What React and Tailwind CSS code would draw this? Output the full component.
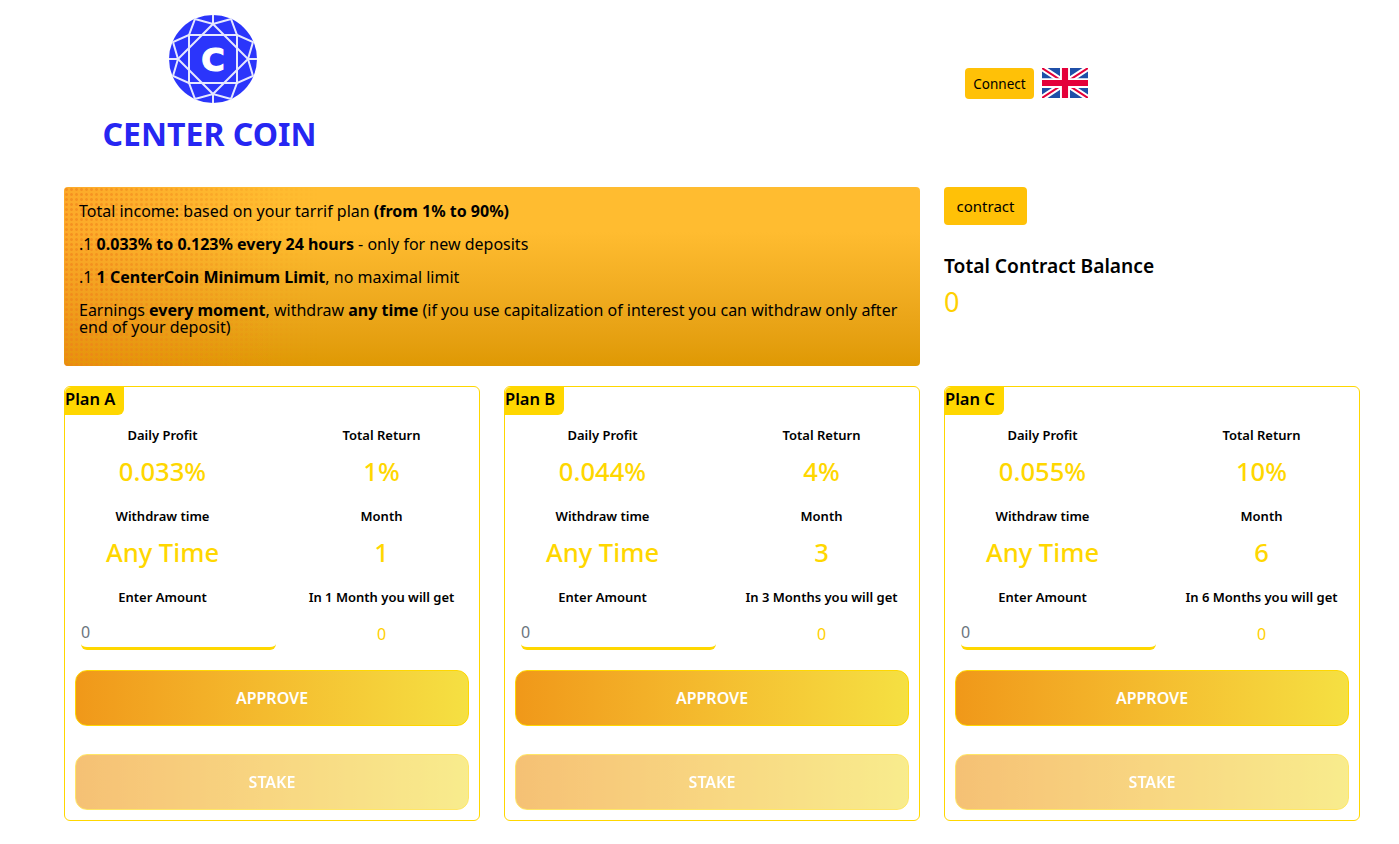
const plans = [
  { name: 'Plan A', daily: '0.033%', total: '1%', month: '1', get: 'In 1 Month you will get' },
  { name: 'Plan B', daily: '0.044%', total: '4%', month: '3', get: 'In 3 Months you will get' },
  { name: 'Plan C', daily: '0.055%', total: '10%', month: '6', get: 'In 6 Months you will get' },
]

// facets of the coin: tip -> rim -> square corner -> rim -> tip, all the way round
const facets =
  '0,-35 18,-40 24,-24 40,-17 35,0 40,17 24,24 18,40 0,35 -18,40 -24,24 -40,17 -35,0 -40,-17 -24,-24 -18,-40'

function Logo() {
  return (
    <svg width="88" height="88" viewBox="-44 -44 88 88">
      <circle cx="0" cy="0" r="44" fill="#2b35fb" />
      <g fill="none" stroke="#e6e8ff" strokeWidth="2">
        <polygon points={facets} />
        <rect x="-24" y="-24" width="48" height="48" />
        <polygon points="0,-35 35,0 0,35 -35,0" />
        <path d="M0 -44V-35M0 44V35M-44 0H-35M44 0H35" />
      </g>
      <text
        x="0"
        y="12"
        textAnchor="middle"
        fill="#fff"
        stroke="#fff"
        strokeWidth="1.2"
        fontSize="32"
        fontWeight="700"
        fontFamily="'DejaVu Sans', sans-serif"
      >
        C
      </text>
    </svg>
  )
}

function Flag() {
  return (
    <svg width="46" height="30" viewBox="0 0 60 40" preserveAspectRatio="none">
      <rect width="60" height="40" fill="#1f4fa8" />
      <path d="M0 0L60 40M60 0L0 40" stroke="#fff" strokeWidth="8" />
      <path d="M0 0L60 40M60 0L0 40" stroke="#e4003a" strokeWidth="2.6" />
      <path d="M30 0V40M0 20H60" stroke="#fff" strokeWidth="13" />
      <path d="M30 0V40M0 20H60" stroke="#e4003a" strokeWidth="8" />
    </svg>
  )
}

function Stat({ label, value }) {
  return (
    <div className="text-center">
      <div className="h-5 text-[13px] leading-5 font-semibold text-black">{label}</div>
      <div className="h-[54px] mb-[7px] leading-[54px] text-[#ffd700] text-[25.6px] font-medium">{value}</div>
    </div>
  )
}

function PlanCard({ plan }) {
  return (
    <div className="border border-[#ffd700] rounded-md bg-white">
      <div className="w-[59px] h-7 bg-[#ffd700] rounded-br-md rounded-tl-md text-[16.5px] leading-6 font-semibold text-black">
        {plan.name}
      </div>
      <div className="grid grid-cols-[219px_219px] -mx-3 pt-2.5">
        <Stat label="Daily Profit" value={plan.daily} />
        <Stat label="Total Return" value={plan.total} />
        <Stat label="Withdraw time" value="Any Time" />
        <Stat label="Month" value={plan.month} />
        <div className="h-5 text-[13px] leading-5 font-semibold text-black text-center">Enter Amount</div>
        <div className="h-5 text-[13px] leading-5 font-semibold text-black text-center">{plan.get}</div>
        <div className="pt-[11px] pl-[28px]">
          <input
            placeholder="0"
            className="block w-[195px] h-8 pb-0.5 border-b-[3px] border-[#ffd700] rounded-md text-[16px] outline-none placeholder:text-[#6c757d]"
          />
        </div>
        <div className="pt-[11px] h-[43px] text-center text-[16px] leading-8 text-[#ffd000]">0</div>
      </div>
      <div className="flex flex-col gap-7 px-2.5 pt-5 pb-2.5">
        <button className="h-14 rounded-xl border border-[#ffd700] bg-linear-to-r from-[#f09819] to-[#f5e042] text-[16px] font-semibold text-white">
          APPROVE
        </button>
        <button className="h-14 rounded-xl border border-[#ffd700] bg-linear-to-r from-[#f09819] to-[#f5e042] text-[16px] font-semibold text-white opacity-60">
          STAKE
        </button>
      </div>
    </div>
  )
}

export default function App() {
  return (
    <div className="min-h-[844px] bg-white pl-16 pr-[39px] font-['Noto_Sans','Open_Sans',sans-serif] text-black">
      <div className="flex h-[187px]">
        <div className="w-[298px] pt-[15px] flex flex-col items-center">
          <Logo />
          <div className="mt-[6px] mr-[7px] text-[32px] leading-[50px] font-bold text-[#2626f2] whitespace-nowrap">CENTER COIN</div>
        </div>
        <div className="ml-[603px] pt-[68px] flex items-start gap-2">
          <button className="w-[69px] h-[31px] pt-px bg-[#ffc107] rounded text-[13.5px] text-black">Connect</button>
          <Flag />
        </div>
      </div>

      <div className="grid grid-cols-3 gap-6 mb-5">
        <div className="col-span-2 relative h-[179px] rounded overflow-hidden bg-linear-to-b from-[#ffbc30] from-25% to-[#df9903] px-[15px] pt-4 text-[16px] leading-[17px]">
          <div className="absolute inset-0 bg-linear-to-r from-[#f7881c]/35 to-transparent to-25%" />
          <div className="absolute inset-0 w-[30%] bg-[radial-gradient(circle,#f0801c_1.2px,transparent_1.6px)] bg-size-[5px_5px] [mask-image:linear-gradient(to_right,black,transparent)] opacity-60" />
          <div className="relative">
            <p className="mb-4">Total income: based on your tarrif plan <b>(from 1% to 90%)</b></p>
            <p className="mb-4">.1 <b>0.033% to 0.123% every 24 hours</b> - only for new deposits</p>
            <p className="mb-4">.1 <b>1 CenterCoin Minimum Limit</b>, no maximal limit</p>
            <p>
              Earnings <b>every moment</b>, withdraw <b>any time</b> (if you use capitalization of interest you can withdraw only after end of your deposit)
            </p>
          </div>
        </div>
        <div>
          <button className="w-[83px] h-[38px] bg-[#ffc107] rounded text-[15px] text-black">contract</button>
          <div className="mt-[27px] text-[19.2px] leading-7 font-semibold">Total Contract Balance</div>
          <div className="mt-1 text-[27px] leading-9 text-[#ffd000]">0</div>
        </div>
      </div>

      <div className="grid grid-cols-3 gap-6">
        {plans.map((p) => (
          <PlanCard key={p.name} plan={p} />
        ))}
      </div>
    </div>
  )
}
